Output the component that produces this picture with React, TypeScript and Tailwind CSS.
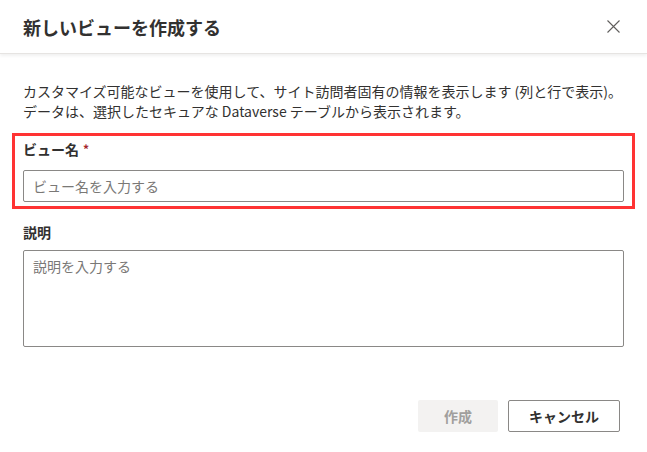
const font = { fontFamily: '"Segoe UI", "Noto Sans CJK JP", "Noto Sans", sans-serif' }

const CloseIcon = () => (
  <svg width="13" height="13" viewBox="0 0 13 13" fill="none">
    <path d="M0.5 0.5L12.5 12.5M12.5 0.5L0.5 12.5" stroke="#605e5c" strokeWidth="1.1" />
  </svg>
)

export default function App() {
  return (
    <div
      className="w-[647px] h-[452px] bg-white text-[#323130] flex flex-col overflow-hidden"
      style={font}
    >
      <div className="h-[54px] flex items-center justify-between pl-[23px] pr-[22px] border-b border-[#e6e4e2] shadow-[0_2px_3px_rgba(0,0,0,0.06)]">
        <h1 className="text-[18px] font-bold leading-none">新しいビューを作成する</h1>
        <button className="w-6 h-6 flex items-center justify-center">
          <CloseIcon />
        </button>
      </div>

      <div className="flex flex-col px-[23px] pt-[27px]">
        <p className="text-[14px] leading-[20px]">
          カスタマイズ可能なビューを使用して、サイト訪問者固有の情報を表示します (列と行で表示)。
          <br />
          データは、選択したセキュアな Dataverse テーブルから表示されます。
        </p>

        <div className="mt-[12px] -mx-[11px] px-[8px] pt-[2px] pb-[4px] border-[3px] border-[#ff3333]">
          <label className="flex items-center h-[22px] text-[14px] font-semibold">
            ビュー名
            <span className="ml-[4px] text-[#a4262c] text-[12px]">*</span>
          </label>
          <input
            placeholder="ビュー名を入力する"
            className="mt-[10px] w-full h-[32px] px-[9px] text-[14px] border border-[#8a8886] rounded-[2px] outline-none placeholder:text-[#7a7876]"
          />
        </div>

        <label className="mt-[12px] flex items-center h-[22px] text-[14px] font-semibold">説明</label>
        <textarea
          placeholder="説明を入力する"
          className="mt-[7px] w-full h-[97px] px-[9px] py-[5px] text-[14px] leading-[20px] border border-[#8a8886] rounded-[2px] outline-none resize-none placeholder:text-[#7a7876]"
        />

        <div className="mt-[53px] flex justify-end gap-[10px] pr-[4px]">
          <button
            disabled
            className="w-[80px] h-[32px] bg-[#f3f2f1] text-[#a19f9d] text-[14px] font-semibold rounded-[2px]"
          >
            作成
          </button>
          <button className="w-[112px] h-[32px] border border-[#8a8886] text-[14px] font-semibold rounded-[2px]">
            キャンセル
          </button>
        </div>
      </div>
    </div>
  )
}
